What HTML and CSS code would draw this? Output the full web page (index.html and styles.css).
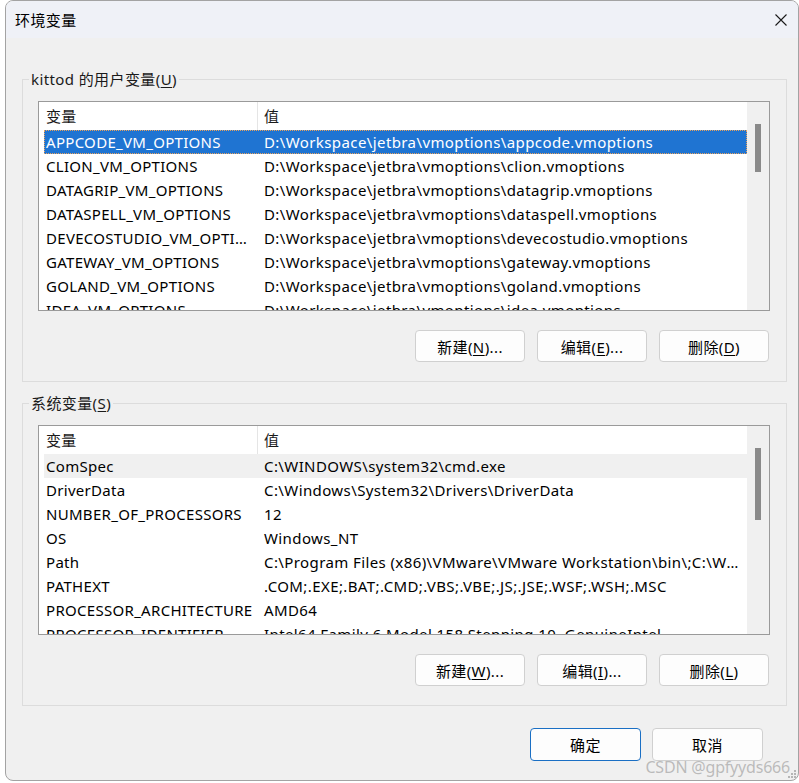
FILE: index.html
```html
<!DOCTYPE html>
<html lang="zh-CN">
<head>
    <meta charset="utf-8">
    <title>环境变量</title>
    <link rel="stylesheet" href="styles.css">
</head>
<body>
<div class="window">
    <div class="titlebar">
        <span class="title">环境变量</span>
        <svg class="close" width="12" height="12" viewBox="0 0 12 12">
            <path d="M0.5 0.5 L11.5 11.5 M11.5 0.5 L0.5 11.5" stroke="#1a1a1a" stroke-width="1.1" fill="none"/>
        </svg>
    </div>
    <div class="content">
        <fieldset class="group">
            <legend class="group__label">kittod 的用户变量(<u>U</u>)</legend>
            <div class="group__inner">
                <div class="listbox">
                    <div class="listbox__body">
                        <div class="row row_header"><span class="cell cell_name">变量</span><span class="cell cell_value">值</span></div>
                        <div class="row row_selected"><span class="cell cell_name">APPCODE_VM_OPTIONS</span><span class="cell cell_value">D:\Workspace\jetbra\vmoptions\appcode.vmoptions</span></div>
                        <div class="row"><span class="cell cell_name">CLION_VM_OPTIONS</span><span class="cell cell_value">D:\Workspace\jetbra\vmoptions\clion.vmoptions</span></div>
                        <div class="row"><span class="cell cell_name">DATAGRIP_VM_OPTIONS</span><span class="cell cell_value">D:\Workspace\jetbra\vmoptions\datagrip.vmoptions</span></div>
                        <div class="row"><span class="cell cell_name">DATASPELL_VM_OPTIONS</span><span class="cell cell_value">D:\Workspace\jetbra\vmoptions\dataspell.vmoptions</span></div>
                        <div class="row"><span class="cell cell_name">DEVECOSTUDIO_VM_OPTIONS</span><span class="cell cell_value">D:\Workspace\jetbra\vmoptions\devecostudio.vmoptions</span></div>
                        <div class="row"><span class="cell cell_name">GATEWAY_VM_OPTIONS</span><span class="cell cell_value">D:\Workspace\jetbra\vmoptions\gateway.vmoptions</span></div>
                        <div class="row"><span class="cell cell_name">GOLAND_VM_OPTIONS</span><span class="cell cell_value">D:\Workspace\jetbra\vmoptions\goland.vmoptions</span></div>
                        <div class="row"><span class="cell cell_name">IDEA_VM_OPTIONS</span><span class="cell cell_value">D:\Workspace\jetbra\vmoptions\idea.vmoptions</span></div>
                    </div>
                    <div class="scrollbar"><div class="scrollbar__thumb scrollbar__thumb_user"></div></div>
                </div>
                <div class="buttons">
                    <button class="button">新建(<u>N</u>)...</button>
                    <button class="button">编辑(<u>E</u>)...</button>
                    <button class="button">删除(<u>D</u>)</button>
                </div>
            </div>
        </fieldset>

        <fieldset class="group group_system">
            <legend class="group__label">系统变量(<u>S</u>)</legend>
            <div class="group__inner">
                <div class="listbox">
                    <div class="listbox__body">
                        <div class="row row_header"><span class="cell cell_name">变量</span><span class="cell cell_value">值</span></div>
                        <div class="row row_inactive"><span class="cell cell_name">ComSpec</span><span class="cell cell_value">C:\WINDOWS\system32\cmd.exe</span></div>
                        <div class="row"><span class="cell cell_name">DriverData</span><span class="cell cell_value">C:\Windows\System32\Drivers\DriverData</span></div>
                        <div class="row"><span class="cell cell_name">NUMBER_OF_PROCESSORS</span><span class="cell cell_value">12</span></div>
                        <div class="row"><span class="cell cell_name">OS</span><span class="cell cell_value">Windows_NT</span></div>
                        <div class="row"><span class="cell cell_name">Path</span><span class="cell cell_value">C:\Program Files (x86)\VMware\VMware Workstation\bin\;C:\WINDOWS\system32;C:\WINDOWS</span></div>
                        <div class="row"><span class="cell cell_name">PATHEXT</span><span class="cell cell_value">.COM;.EXE;.BAT;.CMD;.VBS;.VBE;.JS;.JSE;.WSF;.WSH;.MSC</span></div>
                        <div class="row"><span class="cell cell_name">PROCESSOR_ARCHITECTURE</span><span class="cell cell_value">AMD64</span></div>
                        <div class="row"><span class="cell cell_name">PROCESSOR_IDENTIFIER</span><span class="cell cell_value">Intel64 Family 6 Model 158 Stepping 10, GenuineIntel</span></div>
                    </div>
                    <div class="scrollbar"><div class="scrollbar__thumb scrollbar__thumb_system"></div></div>
                </div>
                <div class="buttons">
                    <button class="button">新建(<u>W</u>)...</button>
                    <button class="button">编辑(<u>I</u>)...</button>
                    <button class="button">删除(<u>L</u>)</button>
                </div>
            </div>
        </fieldset>

        <div class="dialogButtons">
            <button class="button button_default">确定</button>
            <button class="button">取消</button>
        </div>
    </div>
    <span class="watermark">CSDN @gpfyyds666</span>
    <svg class="grip" width="8" height="8" viewBox="0 0 8 8">
        <rect x="6" y="0" width="2" height="2" fill="#b5b5b5"/>
        <rect x="3" y="3" width="2" height="2" fill="#b5b5b5"/>
        <rect x="6" y="3" width="2" height="2" fill="#b5b5b5"/>
        <rect x="0" y="6" width="2" height="2" fill="#b5b5b5"/>
        <rect x="3" y="6" width="2" height="2" fill="#b5b5b5"/>
        <rect x="6" y="6" width="2" height="2" fill="#b5b5b5"/>
    </svg>
</div>
</body>
</html>
```

FILE: styles.css
```css
body {
    margin: 0;
    padding: 0;
    background: #fff;
    font-family: 'Noto Sans', 'Noto Sans CJK SC', sans-serif;
    font-size: 15px;
    letter-spacing: 0.4px;
    color: #000;
}

u {
    text-decoration-thickness: 1px;
    text-underline-offset: 2px;
}

.window {
    position: relative;
    box-sizing: border-box;
    margin-left: 5px;
    width: 794px;
    height: 781px;
    border: 1px solid #a3a3a3;
    border-radius: 8px;
    background: #f0f0f0;
    overflow: hidden;
}

.titlebar {
    display: flex;
    align-items: center;
    justify-content: space-between;
    height: 37px;
    padding: 0 11px 0 9px;
    background: #eff1f7;
}

.title {
    line-height: 20px;
}

.close {
    display: block;
}

.content {
    padding: 31px 11px 0 16px;
}

.group {
    margin: 0;
    padding: 0;
    min-width: 0;
    border: 1px solid #dcdcdc;
}

.group_system {
    margin-top: 11px;
}

.group__label {
    margin-left: 6px;
    padding: 0 2px;
    line-height: 20px;
    color: #1a1a1a;
}

.group__inner {
    padding: 12px 16px 19px 15px;
}

.listbox {
    display: flex;
    height: 210px;
    box-sizing: border-box;
    border: 1px solid #9a9a9a;
    background: #fff;
    overflow: hidden;
}

.listbox__body {
    flex-grow: 1;
    min-width: 1px;
    padding-left: 5px;
    overflow: hidden;
}

.row {
    display: flex;
    height: 24px;
    line-height: 24px;
    white-space: nowrap;
}

.row_header {
    height: 28px;
    line-height: 28px;
    color: #1a1a1a;
}

.row_header .cell_name {
    border-right: 1px solid #e5e5e5;
}

.row_selected {
    background: #1f74d2;
    color: #fff;
    outline: 1px dotted #e9a25c;
    outline-offset: -1px;
}

.row_inactive {
    background: #f0f0f0;
}

.cell {
    overflow: hidden;
    text-overflow: ellipsis;
}

.cell_name {
    box-sizing: border-box;
    flex-shrink: 0;
    width: 214px;
    padding-left: 2px;
    letter-spacing: 0.3px;
}

.cell_value {
    flex-grow: 1;
    min-width: 1px;
    padding-left: 6px;
    padding-right: 4px;
}

.scrollbar {
    display: flex;
    flex-direction: column;
    align-items: center;
    flex-shrink: 0;
    width: 22px;
    background: #f0f0f0;
}

.scrollbar__thumb {
    width: 6px;
    margin-top: 22px;
    background: #8a8a8a;
}

.scrollbar__thumb_user {
    height: 48px;
}

.scrollbar__thumb_system {
    height: 72px;
}

.buttons {
    display: flex;
    justify-content: flex-end;
    gap: 12px;
    margin: 19px 1px 0 0;
}

.button {
    box-sizing: border-box;
    width: 110px;
    height: 32px;
    padding: 0;
    border: 1px solid #d0d0d0;
    border-radius: 4px;
    background: #fdfdfd;
    font-family: inherit;
    font-size: 15px;
    letter-spacing: inherit;
    color: #000;
}

.dialogButtons {
    display: flex;
    justify-content: flex-end;
    gap: 11px;
    margin: 22px 24px 0 0;
}

.dialogButtons .button {
    width: 111px;
    height: 33px;
}

.button_default {
    border-color: #1a6fc4;
}

.watermark {
    position: absolute;
    right: 8px;
    bottom: 2px;
    font-size: 16px;
    letter-spacing: -0.2px;
    color: rgba(150, 150, 150, 0.6);
}

.grip {
    position: absolute;
    right: 2px;
    bottom: 2px;
}
```
